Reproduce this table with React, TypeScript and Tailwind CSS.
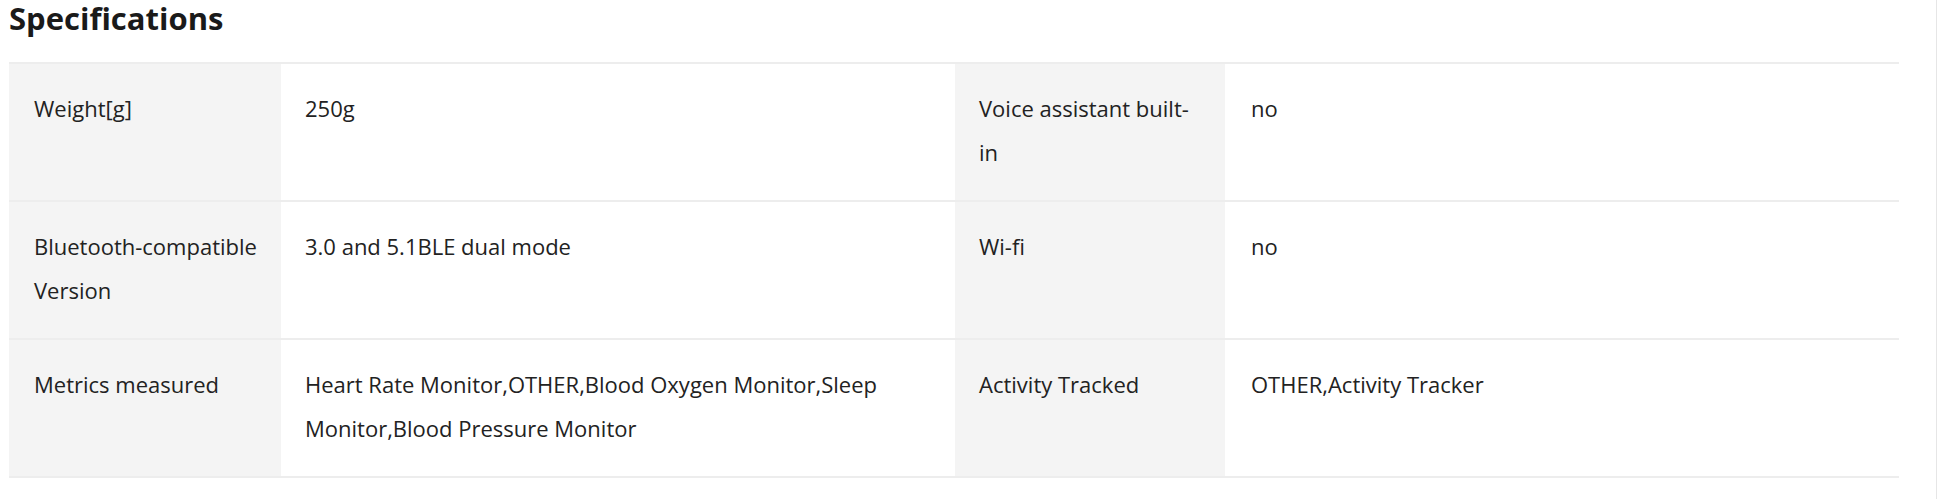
import React from "react";

const rows = [
  ["Weight[g]", "250g", "Voice assistant built-in", "no"],
  ["Bluetooth-compatible Version", "3.0 and 5.1BLE dual mode", "Wi-fi", "no"],
  [
    "Metrics measured",
    "Heart Rate Monitor,OTHER,Blood Oxygen Monitor,Sleep Monitor,Blood Pressure Monitor",
    "Activity Tracked",
    "OTHER,Activity Tracker",
  ],
];

export default function App() {
  return (
    <div className="w-[1946px] h-[499px] bg-white flex font-['Open_Sans',sans-serif] text-[#222]">
      <div className="w-[1937px] border-r border-[#e6e6e6] pl-[9px]">
        <h2 className="h-[38px] leading-[36px] text-[31px] font-bold text-[#1a1a1a]">
          Specifications
        </h2>
        <table className="mt-[24px] w-[1890px] table-fixed border-collapse border-t-2 border-[#ededed] text-[22px] leading-[44px]">
          <colgroup>
            <col className="w-[272px]" />
            <col className="w-[674px]" />
            <col className="w-[270px]" />
            <col className="w-[674px]" />
          </colgroup>
          <tbody>
            {rows.map((r, i) => (
              <tr key={i} className="border-b-2 border-[#ededed] h-[138px]">
                <td className="align-top bg-[#f4f4f4] pl-[25px] pr-[20px] pt-[22px] pb-[22px]">{r[0]}</td>
                <td className="align-top pl-[24px] pr-[20px] pt-[22px] pb-[22px]">{r[1]}</td>
                <td className="align-top bg-[#f4f4f4] pl-[24px] pr-[20px] pt-[22px] pb-[22px]">{r[2]}</td>
                <td className="align-top pl-[26px] pr-[20px] pt-[22px] pb-[22px]">{r[3]}</td>
              </tr>
            ))}
          </tbody>
        </table>
      </div>
    </div>
  );
}
